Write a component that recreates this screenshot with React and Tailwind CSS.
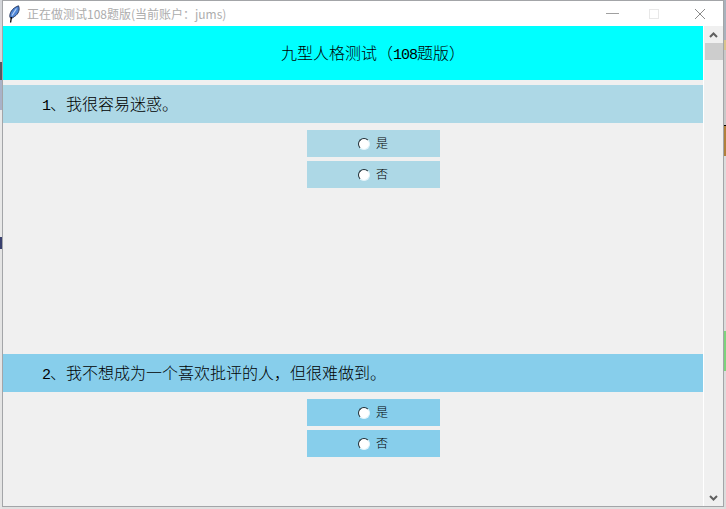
function Num({ children }) {
  return <span className="text-[15px] tracking-[-1px] font-['Liberation_Mono',monospace]">{children}</span>;
}

function Feather() {
  return (
    <svg width="13" height="18" viewBox="0 0 13 18" className="shrink-0">
      <path d="M2 12.5 C1 8.5 4 3 10.5 0.8 C12.2 4.5 10.5 9 6.5 11.5 L3.5 13.5 Z" fill="#4f86d6" stroke="#1d2f55" strokeWidth="0.9" />
      <path d="M8.5 3.5 L4 10.5" stroke="#bcd4f4" strokeWidth="1.2" fill="none" />
      <path d="M3.4 12 L2.6 17.5" stroke="#000" strokeWidth="1.3" fill="none" />
    </svg>
  );
}

function Radio() {
  return (
    <span className="w-[12px] h-[12px] rounded-full bg-white border border-[#1c2b33] border-r-[#e2f4fa] border-b-[#e2f4fa] shrink-0" />
  );
}

function Option({ label, color }) {
  return (
    <div className={`w-[133px] h-[27px] flex items-center pl-[51px] gap-[6px] ${color}`}>
      <Radio />
      <span className="text-[12px] leading-none pb-[2px] text-black font-light font-['Noto_Sans_CJK_SC',sans-serif]">{label}</span>
    </div>
  );
}

function Question({ num, text, color, className }) {
  return (
    <section className={`flex flex-col ${className}`}>
      <div className={`h-[38px] flex items-center pl-[39px] pt-[2px] text-[16px] text-black font-light font-['Noto_Sans_CJK_SC',sans-serif] ${color}`}>
        <span>
          <Num>{num}</Num>、{text}
        </span>
      </div>
      <div className="ml-[304px] mt-[7px] flex flex-col gap-[4px]">
        <Option label="是" color={color} />
        <Option label="否" color={color} />
      </div>
    </section>
  );
}

export default function App() {
  return (
    <div className="w-[726px] h-[509px] flex overflow-hidden bg-[#d6d9dc]">
      <div className="w-[2px] flex flex-col shrink-0">
        <div className="h-[62px] bg-[#d4d6da]" />
        <div className="h-[18px] bg-[#555a62]" />
        <div className="h-[30px] bg-[#a9b2c8]" />
        <div className="h-[127px] bg-[#e8e8e8]" />
        <div className="h-[12px] bg-[#39406e]" />
        <div className="flex-1 bg-[#e4e4e4]" />
      </div>
      <div className="w-[722px] flex flex-col shrink-0">
        <div className="h-[507px] border border-[#a3a5a8] flex flex-col bg-[#f0f0f0]">
          <header className="h-[25px] bg-white flex items-center pl-[5px] shrink-0 relative">
            <Feather />
            <span className="ml-[6px] text-[12px] text-[#adadad] font-['Noto_Sans_CJK_SC',sans-serif]">
              正在做测试108题版(当前账户：jums)
            </span>
            <div className="ml-auto flex items-center h-full">
              <span className="w-[13px] h-[1px] bg-[#a0a0a0] mr-[30px]" />
              <span className="w-[10px] h-[10px] border border-[#e8e8e8] mr-[35px]" />
              <svg width="12" height="12" viewBox="0 0 12 12" className="mr-[17px]">
                <path d="M1 1 L11 11 M11 1 L1 11" stroke="#8a8a8a" strokeWidth="1" fill="none" />
              </svg>
            </div>
          </header>
          <div className="flex flex-1 min-h-0">
            <main className="w-[700px] bg-[#f0f0f0] flex flex-col">
              <div className="h-[54px] mb-[5px] bg-[#00ffff] flex items-center justify-center pl-[40px] pt-[2px] text-[16px] text-black font-light font-['Noto_Sans_CJK_SC',sans-serif]">
                <span>九型人格测试（<Num>108</Num>题版）</span>
              </div>
              <Question num="1" text="我很容易迷惑。" color="bg-[#add8e6]" className="h-[269px]" />
              <Question num="2" text="我不想成为一个喜欢批评的人，但很难做到。" color="bg-[#87ceeb]" />
            </main>
            <div className="w-[1px] bg-white" />
            <aside className="w-[19px] bg-[#f0f0f0] flex flex-col items-center">
              <svg width="9" height="6" viewBox="0 0 9 6" className="mt-[6px]">
                <path d="M1 5 L4.5 1.5 L8 5" stroke="#606060" strokeWidth="2" fill="none" />
              </svg>
              <div className="w-[18px] h-[17px] mt-[5px] bg-[#cdcdcd]" />
              <svg width="9" height="6" viewBox="0 0 9 6" className="mt-auto mb-[5px]">
                <path d="M1 1 L4.5 4.5 L8 1" stroke="#606060" strokeWidth="2" fill="none" />
              </svg>
            </aside>
          </div>
        </div>
        <div className="h-[2px] bg-[#e0e0e0]" />
      </div>
      <div className="w-[2px] flex flex-col shrink-0">
        <div className="h-[40px] bg-[#a8b2bc]" />
        <div className="h-[10px] bg-[#d8c48c]" />
        <div className="h-[75px] bg-[#c8c8c8]" />
        <div className="h-[1px] bg-black" />
        <div className="h-[30px] bg-[#b0803c]" />
        <div className="h-[175px] bg-[#dcdcdc]" />
        <div className="h-[40px] bg-[#7dd37d]" />
        <div className="flex-1 bg-[#dcdcdc]" />
      </div>
    </div>
  );
}
